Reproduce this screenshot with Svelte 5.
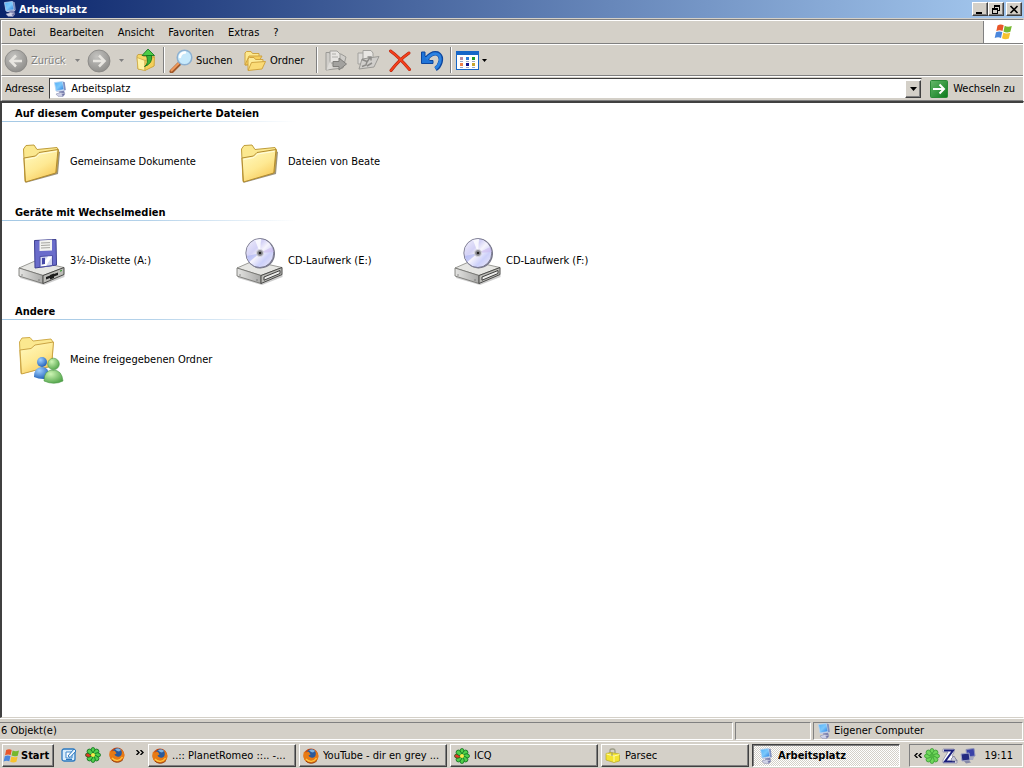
<script lang="ts">
	interface Item {
		name: string;
		icon: string;
	}

	interface Group {
		title: string;
		items: Item[];
	}

	const menu = ['Datei', 'Bearbeiten', 'Ansicht', 'Favoriten', 'Extras', '?'];

	const groups: Group[] = [
		{
			title: 'Auf diesem Computer gespeicherte Dateien',
			items: [
				{ name: 'Gemeinsame Dokumente', icon: 'folder' },
				{ name: 'Dateien von Beate', icon: 'folder' }
			]
		},
		{
			title: 'Geräte mit Wechselmedien',
			items: [
				{ name: '3½-Diskette (A:)', icon: 'floppy' },
				{ name: 'CD-Laufwerk (E:)', icon: 'cd' },
				{ name: 'CD-Laufwerk (F:)', icon: 'cd' }
			]
		},
		{
			title: 'Andere',
			items: [{ name: 'Meine freigegebenen Ordner', icon: 'shared' }]
		}
	];

	const tasks = [
		{ title: '..:: PlanetRomeo ::.. -...', icon: 'firefox' },
		{ title: 'YouTube - dir en grey ...', icon: 'firefox' },
		{ title: 'ICQ', icon: 'icq' },
		{ title: 'Parsec', icon: 'parsec' },
		{ title: 'Arbeitsplatz', icon: 'computer' }
	];

	let active = $state('Arbeitsplatz');
	let address = $state('Arbeitsplatz');
	let selected = $state('');
</script>

<!-- shared gradients -->
<svg class="defs" width="0" height="0" aria-hidden="true">
	<defs>
		<linearGradient id="folderFront" x1="0" y1="0" x2="0.6" y2="1">
			<stop offset="0" stop-color="#fffbc4" />
			<stop offset="0.6" stop-color="#fee993" />
			<stop offset="1" stop-color="#f8cb5c" />
		</linearGradient>
		<linearGradient id="screen" x1="0" y1="0" x2="1" y2="1">
			<stop offset="0" stop-color="#4fb0f8" />
			<stop offset="0.5" stop-color="#7cc8fb" />
			<stop offset="1" stop-color="#1e74dc" />
		</linearGradient>
		<linearGradient id="disc" x1="0" y1="0" x2="1" y2="1">
			<stop offset="0" stop-color="#f4f2fb" />
			<stop offset="0.35" stop-color="#d4d2f6" />
			<stop offset="0.5" stop-color="#f6f4fc" />
			<stop offset="0.7" stop-color="#ccd0fa" />
			<stop offset="1" stop-color="#f1ecf6" />
		</linearGradient>
		<linearGradient id="steel" x1="0" y1="0" x2="1" y2="0">
			<stop offset="0" stop-color="#e4e4e2" />
			<stop offset="1" stop-color="#a9a9a7" />
		</linearGradient>
		<radialGradient id="nav" cx="0.4" cy="0.3" r="0.75">
			<stop offset="0" stop-color="#c4c3c0" />
			<stop offset="1" stop-color="#8d8c89" />
		</radialGradient>
		<radialGradient id="blueMan" cx="0.35" cy="0.3" r="0.8">
			<stop offset="0" stop-color="#9fd0ff" />
			<stop offset="1" stop-color="#1657b4" />
		</radialGradient>
		<radialGradient id="greenMan" cx="0.35" cy="0.3" r="0.8">
			<stop offset="0" stop-color="#cdf5b4" />
			<stop offset="1" stop-color="#4a9f43" />
		</radialGradient>
		<linearGradient id="go" x1="0" y1="0" x2="1" y2="1">
			<stop offset="0" stop-color="#66b96a" />
			<stop offset="1" stop-color="#0b7a1c" />
		</linearGradient>
		<radialGradient id="fox" cx="0.6" cy="0.7" r="0.7">
			<stop offset="0" stop-color="#ffb52a" />
			<stop offset="1" stop-color="#c8420a" />
		</radialGradient>
	</defs>
</svg>

{#snippet computer()}
	<svg width="16" height="16" viewBox="0 0 16 16" aria-hidden="true">
		<path d="M2.500 1.500 10.500 0.500 12 8.500 4 10Z" fill="url(#screen)" stroke="#b8d4f2" stroke-width="0.800" />
		<path d="M10.800 0.500 12.800 1.200 13.800 9 12.200 9.500Z" fill="#7f90c0" />
		<path d="M4 10.300 12.200 9 13.500 9.300 12 10.500 5 11Z" fill="#c3cbe6" />
		<path d="M7 10.500 12 9.800 12.800 12 8 13Z" fill="#7d83b0" />
		<path d="M4 13 8.500 11.500 13 12.800 11 15.500 6 15.300Z" fill="#d0d3e8" stroke="#8c90b4" stroke-width="0.600" />
		<path d="M9.500 13.500 13 12.500 11 15.300Z" fill="#6d70a4" />
	</svg>
{/snippet}

{#snippet flag()}
	<svg width="20" height="18" viewBox="0 0 20 18" aria-hidden="true">
		<path d="M3.500 2.400C5.700 1 7.800 1.200 9.700 2.200L8.500 8C6.500 7 4.500 7 2.300 8.200Z" fill="#e8562a" />
		<path d="M10.700 2.800C12.800 3.900 15 4 17.800 2.900L16.400 8.700C14 9.700 11.500 9.600 9.500 8.500Z" fill="#76b82f" />
		<path d="M2 9.300C4.200 8.100 6.300 8.200 8.300 9.100L7 14.900C5 13.900 3 13.900 0.700 15Z" fill="#4a86dc" />
		<path d="M9.300 9.600C11.400 10.700 13.600 10.700 16.200 9.800L14.900 15.500C12.300 16.600 10 16.400 8 15.300Z" fill="#f7c22e" />
	</svg>
{/snippet}

{#snippet firefox()}
	<svg width="16" height="16" viewBox="0 0 16 16" aria-hidden="true">
		<circle cx="8" cy="8" r="7.500" fill="url(#fox)" />
		<circle cx="8.400" cy="6.200" r="5" fill="#2a5a9c" />
		<path d="M6 2.200C8 1 11 1.600 12 3L10 4.500 8 4Z" fill="#7fb4e0" />
		<path d="M1 3.500 3 4.500C4 3.500 5 3.500 6 4L7.500 6.500 5.500 7.600C6.500 10 10 10.500 12 8.500 13.300 6.500 12.800 4 12 2.500 15 4.500 16 8 14.700 11 12 16 4.500 16.500 1.600 12 0 9 0.200 6 1 3.500Z" fill="#e87a14" />
		<path d="M3 11C6 14.500 11 14 13.500 10" fill="none" stroke="#ffc742" stroke-width="1.300" />
		<path d="M3 13C6 16 11 16 14 12.500" fill="none" stroke="#7a2c0c" stroke-width="0.800" />
	</svg>
{/snippet}

{#snippet icq(light: boolean)}
	<svg width="16" height="16" viewBox="0 0 16 16" aria-hidden="true">
		{#each [0, 45, 90, 135, 180, 225, 270, 315] as angle (angle)}
			<ellipse
				cx="8"
				cy="3.500"
				rx="2.200"
				ry="3"
				transform="rotate({angle} 8 8)"
				fill={!light && angle === 270 ? '#e03a24' : light ? '#6fd65a' : '#4fd04a'}
				stroke={light ? '#3a9a34' : '#0e6b1c'}
				stroke-width="0.800"
			/>
		{/each}
		<circle cx="8" cy="8" r="2" fill={light ? '#4fb840' : '#f8ec4a'} />
	</svg>
{/snippet}

{#snippet parsec()}
	<svg width="16" height="16" viewBox="0 0 16 16" aria-hidden="true">
		<path d="M5 5V2.500Q5 1 7 1H8Q10 1 10 3V5" fill="none" stroke="#9c9c86" stroke-width="1.300" />
		<path d="M1 5.500 6 4.500 14.500 6V13L9 14.500 1 12Z" fill="#f3e330" stroke="#b8a824" stroke-width="0.700" />
		<path d="M1.500 6 9 8 14.500 6.500M9 8V14" fill="none" stroke="#fffbaa" />
		<path d="M7 4.500V8" stroke="#8d8d7a" />
	</svg>
{/snippet}

{#snippet folder()}
	<svg width="48" height="48" viewBox="0 0 48 48" aria-hidden="true">
		<path d="M8 45 41 36 43 14 41 13 39 33 9 44Z" fill="#70654a" opacity="0.700" />
		<path d="M6.500 11 9 7.500 17 7 20 11.500 40 9.500 41.500 12 39.500 34 8 43.500Z" fill="#fbe88f" stroke="#bf9d3b" />
		<path d="M7 20 18.500 18 22 14.500 41 11.500 38.800 35 8.500 44Z" fill="url(#folderFront)" stroke="#b28b2e" />
		<path d="M8.500 21.500 19 19.500 22.500 16 39.500 13.300" fill="none" stroke="#fffde0" />
	</svg>
{/snippet}

{#snippet base()}
	<path d="M3 38 27 45.500 47.500 37 47.500 40 27 48 3 41Z" fill="#9b9b9b" opacity="0.500" />
	<path d="M2 31 18 24 47 30.500 26 38.500Z" fill="#e6e6e3" stroke="#84847f" stroke-width="0.800" />
	<path d="M2 31 26 38.500V46.500L2 39Z" fill="url(#steel)" stroke="#6c6c68" stroke-width="0.800" />
	<path d="M26 38.500 47 30.500V37.500L26 46.500Z" fill="#bcbcb8" stroke="#4a4a48" />
	<path d="M5 37.500v1M22 42.500v1" stroke="#444" />
{/snippet}

{#snippet floppy()}
	<svg width="48" height="48" viewBox="0 0 48 48" aria-hidden="true">
		{@render base()}
		<path d="M29 40 41 35.500V38L29 42.500Z" fill="#1c1c1c" />
		<path d="M33 38 37 36.500V41L33 42.500Z" fill="#1c1c1c" />
		<path d="M43 33.500 45 32.700V34L43 34.800Z" fill="#3d9a35" />
		<path d="M17.500 3.500 39 2.500 39.500 28 18 31Z" fill="#6a6ccb" stroke="#3d3f90" />
		<path d="M22.500 3.500 35 2.800V13.500L22.500 14Z" fill="#f3f3f0" />
		<path d="M24 6 33 5.600M24 8.500 33 8M24 11 33 10.600" stroke="#a5a5a0" />
		<path d="M23 19.500 35.500 18.500V28.500L23 30.200Z" fill="#d4d8f2" stroke="#4d4fa6" />
		<path d="M24 29 31 19.500H35L29 29Z" fill="#fff" />
		<path d="M25 21 28 20.700V27L25 27.500Z" fill="#4548a8" />
	</svg>
{/snippet}

{#snippet cd()}
	<svg width="48" height="48" viewBox="0 0 48 48" aria-hidden="true">
		{@render base()}
		<path d="M29 40 45 33.500V36.500L29 43.200Z" fill="#ededeb" stroke="#2c2c2c" stroke-width="0.900" />
		<ellipse cx="25.500" cy="16.500" rx="14.500" ry="15" fill="#77778a" />
		<ellipse cx="24.800" cy="16" rx="14" ry="14.500" fill="url(#disc)" stroke="#6c6c80" stroke-width="0.800" />
		<path d="M25 16 12 19 14 25Z" fill="#a9b2f4" opacity="0.600" />
		<path d="M25 16 37 10 39 15Z" fill="#cbb9ee" opacity="0.600" />
		<path d="M25 16 20 3 26 2Z" fill="#fff" opacity="0.800" />
		<circle cx="25" cy="16" r="3.500" fill="#8c8c94" stroke="#dadae2" />
		<circle cx="25" cy="16" r="1.300" fill="#222" />
	</svg>
{/snippet}

{#snippet shared()}
	<svg width="48" height="48" viewBox="0 0 48 48" aria-hidden="true">
		<path d="M2.500 6 5 2 13 1.500 16 5 34 3 36 6 35 30 4 37.500Z" fill="#fbe88f" stroke="#d0ac4a" />
		<path d="M3 14 14 12.500 18 9 36.500 6 34.500 30 4.500 38Z" fill="url(#folderFront)" stroke="#cba444" />
		<path d="M17 41Q17 31 25 31 32 31 32 40L29 43Q22 43.500 17 41Z" fill="url(#blueMan)" />
		<circle cx="25" cy="26" r="5" fill="url(#blueMan)" />
		<path d="M27 45Q27 34 36 34 45 34 46 45 37 49.500 27 45Z" fill="url(#greenMan)" stroke="#4e9a48" stroke-width="0.600" />
		<circle cx="36.500" cy="28" r="5.800" fill="url(#greenMan)" stroke="#4e9a48" stroke-width="0.600" />
	</svg>
{/snippet}

{#snippet nav(dir: string)}
	<svg width="24" height="24" viewBox="0 0 24 24" aria-hidden="true">
		<circle cx="12" cy="12" r="11" fill="url(#nav)" stroke="#858481" stroke-width="0.800" />
		<path
			d={dir === 'back' ? 'M18 12H7M12 6.500 6.500 12 12 17.500' : 'M6 12H17M12 6.500 17.500 12 12 17.500'}
			fill="none"
			stroke="#e8e6e1"
			stroke-width="2.500"
		/>
	</svg>
{/snippet}

{#snippet arrow()}
	<svg width="5" height="3" viewBox="0 0 5 3" aria-hidden="true"><path d="M0 0H5L2.500 3Z" fill="currentColor" /></svg>
{/snippet}

{#snippet icon(name: string)}
	{#if name === 'folder'}
		{@render folder()}
	{:else if name === 'floppy'}
		{@render floppy()}
	{:else if name === 'cd'}
		{@render cd()}
	{:else if name === 'shared'}
		{@render shared()}
	{:else if name === 'firefox'}
		{@render firefox()}
	{:else if name === 'icq'}
		{@render icq(false)}
	{:else if name === 'parsec'}
		{@render parsec()}
	{:else}
		{@render computer()}
	{/if}
{/snippet}

<div class="desktop">
	<header class="titlebar">
		{@render computer()}
		<h1>Arbeitsplatz</h1>
		<div class="window-buttons">
			<button aria-label="Minimieren">
				<svg width="10" height="9" viewBox="0 0 10 9"><path d="M1 7H7V9H1Z" /></svg>
			</button>
			<button aria-label="Verkleinern">
				<svg width="10" height="9" viewBox="0 0 10 9">
					<path d="M3 0H9V6H7V5H8V2H4V3H3ZM1 3H7V9H1ZM2 5V8H6V5Z" fill-rule="evenodd" />
				</svg>
			</button>
			<button class="close" aria-label="Schließen">
				<svg width="10" height="9" viewBox="0 0 10 9"><path d="M1.500 1 8.500 8M8.500 1 1.500 8" stroke="#000" stroke-width="1.600" /></svg>
			</button>
		</div>
	</header>

	<div class="bars">
		<div class="menu-row">
			<nav>
				{#each menu as entry (entry)}
					<button>{entry}</button>
				{/each}
			</nav>
			<div class="logo">{@render flag()}</div>
		</div>

		<div class="toolbar">
			<button class="back" disabled>{@render nav('back')}<span>Zurück</span></button>
			<button class="drop" disabled aria-label="Zurück-Liste">{@render arrow()}</button>
			<button class="forward" disabled aria-label="Vorwärts">{@render nav('forward')}</button>
			<button class="drop wide" disabled aria-label="Vorwärts-Liste">{@render arrow()}</button>
			<button class="up" aria-label="Aufwärts">
				<svg width="20" height="24" viewBox="0 0 20 24" aria-hidden="true">
					<path d="M1 8 2 6.500H6L7.500 8.500 18 8V18L9 22 2 21Z" fill="#f6d766" stroke="#c9a444" />
					<path d="M1 9.500 9 12.500V22.500L2 21Z" fill="#fff3a6" stroke="#cba848" stroke-width="0.800" />
					<path d="M9 12.500 18.500 9 18 18 9 22.500Z" fill="#f5cf5a" stroke="#c9a444" stroke-width="0.800" />
					<path d="M8.500 18.500Q13 16 10.500 7.500H15.500Q17 15.500 8.500 18.500Z" fill="#36b13a" stroke="#0d7016" stroke-width="0.800" />
					<path d="M6 7.500 12 1 18.500 7.500Z" fill="#4ccc48" stroke="#0d7016" stroke-width="0.800" />
				</svg>
			</button>
			<div class="separator"></div>
			<button class="search">
				<svg width="24" height="24" viewBox="0 0 24 24" aria-hidden="true">
					<path d="M10 15 2.500 22.500" stroke="#a0592b" stroke-width="4" stroke-linecap="round" />
					<path d="M9.500 14.500 2.500 21.500" stroke="#f09a5c" stroke-width="2" stroke-linecap="round" />
					<circle cx="15.500" cy="8.500" r="7.300" fill="#c7e9fb" stroke="#8db0d0" stroke-width="1.500" />
					<path d="M11 8Q11.500 4 16 3.500" fill="none" stroke="#fff" stroke-width="2.500" stroke-linecap="round" />
				</svg>
				<span>Suchen</span>
			</button>
			<button class="folders">
				<svg width="24" height="24" viewBox="0 0 24 24" aria-hidden="true">
					<path d="M2 16V4L3.500 2.500H8L9.500 4.500H16V8L6 16Z" fill="#fde98f" stroke="#d0a440" />
					<path d="M2 16 6 7H19L15 14Z" fill="#f8cf5c" stroke="#d0a440" />
					<path d="M5 21V10L6.500 8.500H11L12.500 10.500H20V13Z" fill="#fdeb99" stroke="#d0a440" />
					<path d="M5 21.500 8.500 13.500 22.500 12.500 19 20Z" fill="#fadb76" stroke="#d0a440" />
				</svg>
				<span>Ordner</span>
			</button>
			<div class="separator"></div>
			<button class="tool" disabled aria-label="Verschieben nach">
				<svg width="24" height="24" viewBox="0 0 24 24" aria-hidden="true">
					<path d="M2 21V3.500H6V5H17L22 8 19 19Z" fill="#cfcdc9" stroke="#9b9a96" />
					<path d="M6 2H13L16 5V14H6Z" fill="#e7e5e2" stroke="#a3a29e" />
					<path d="M8 5H12M8 8H14" stroke="#b0afab" />
					<path d="M2.500 21 6 12 9 19Z" fill="#dddbd7" />
					<path d="M9 12.500H15V9L22.500 15 15 21V17.500H9Z" fill="#a3a29f" stroke="#7f7e7b" />
				</svg>
			</button>
			<button class="tool" disabled aria-label="Kopieren nach">
				<svg width="24" height="24" viewBox="0 0 24 24" aria-hidden="true">
					<path d="M2 4H9V15H2Z" fill="#dddbd8" stroke="#a3a29e" />
					<path d="M7 1.500H15L17 4V14H7Z" fill="#e9e7e4" stroke="#a3a29e" />
					<path d="M3 20 6 10 23 7.500 18 18Z" fill="#d0cecb" stroke="#9b9a96" />
					<path d="M6 10.500 11 12.500 10 16 6 17.500M11 13 14 8.500M11.500 8H15V11.500M11 17 16 14" fill="none" stroke="#8d8c89" stroke-width="1.500" />
				</svg>
			</button>
			<button class="tool" aria-label="Löschen">
				<svg width="24" height="24" viewBox="0 0 24 24" aria-hidden="true">
					<path d="M2.500 2Q11 8 21.500 20.500M21 4Q11 11 3 21.500" fill="none" stroke="#b3240d" stroke-width="3" stroke-linecap="round" />
					<path d="M2.500 2Q11 8 21.500 20.500M21 4Q11 11 3 21.500" fill="none" stroke="#f4401c" stroke-width="2" stroke-linecap="round" />
				</svg>
			</button>
			<button class="tool" aria-label="Rückgängig">
				<svg width="24" height="24" viewBox="0 0 24 24" aria-hidden="true">
					<path d="M7 9Q12 3 17.500 4.500 22 7 20.500 13 19 18 15.500 20" fill="none" stroke="#0d469e" stroke-width="4.500" />
					<path d="M1.500 3H5V7L7 9 10 11.500H13V14.500H1.500Z" fill="#1f74d8" stroke="#0d469e" />
					<path d="M6.500 10Q12 3.500 17.500 5 21.500 7 20 13 18.500 17.500 15.500 19.500" fill="none" stroke="#2b82e2" stroke-width="2.800" />
				</svg>
			</button>
			<div class="separator"></div>
			<button class="view" aria-label="Ansichten">
				<svg width="23" height="19" viewBox="0 0 23 19" aria-hidden="true">
					<rect x="0.500" y="0.500" width="22" height="18" fill="#fff" stroke="#1566c8" />
					<path d="M0 0H23V4H0Z" fill="#1566c8" />
					<path d="M4 6H7V9H4Z" fill="#b58ba8" /><path d="M10 6H13V9H10Z" fill="#2b7bd8" /><path d="M16 6H19V9H16Z" fill="#1c9a2c" />
					<path d="M4 12H7V15H4Z" fill="#f08048" /><path d="M10 12H13V15H10Z" fill="#14148c" /><path d="M16 12H19V15H16Z" fill="#c7a52c" />
					<path d="M4 10.500H7M10 10.500H13M16 10.500H19M4 16.500H7M10 16.500H13M16 16.500H19" stroke="#9aa7c4" />
				</svg>
				{@render arrow()}
			</button>
		</div>

		<form class="address-row" onsubmit={(e) => e.preventDefault()}>
			<label for="address">Adresse</label>
			<div class="address">
				{@render computer()}
				<input id="address" type="text" bind:value={address} />
				<button class="open" type="button" aria-label="Liste öffnen">
					<svg width="7" height="4" viewBox="0 0 7 4" aria-hidden="true"><path d="M0 0H7L3.500 4Z" /></svg>
				</button>
			</div>
			<button class="go">
				<svg width="18" height="18" viewBox="0 0 18 18" aria-hidden="true">
					<rect x="0.500" y="0.500" width="17" height="17" rx="1" fill="url(#go)" stroke="#2a8a36" />
					<path d="M3 9H14M9.500 4.500 14 9 9.500 13.500" fill="none" stroke="#fff" stroke-width="2" />
				</svg>
				<span>Wechseln zu</span>
			</button>
		</form>
	</div>

	<main>
		{#each groups as group (group.title)}
			<section>
				<h2>{group.title}</h2>
				<div class="items">
					{#each group.items as item (item.name)}
						<button class="item" class:selected={selected === item.name} onclick={() => (selected = item.name)}>
							{@render icon(item.icon)}
							<span>{item.name}</span>
						</button>
					{/each}
				</div>
			</section>
		{/each}
	</main>

	<footer class="status">
		<div class="count">6 Objekt(e)</div>
		<div class="blank"></div>
		<div class="zone">{@render computer()}<span>Eigener Computer</span></div>
	</footer>

	<div class="taskbar">
		<button class="raised start">{@render flag()}<span>Start</span></button>
		<div class="quick">
			<button aria-label="Desktop anzeigen">
				<svg width="16" height="16" viewBox="0 0 16 16" aria-hidden="true">
					<rect x="1" y="2" width="13" height="12" rx="2" fill="#d8ecfb" stroke="#2b78c0" stroke-width="1.300" />
					<path d="M5 5H11V11H5Z" fill="#fff" stroke="#3d86ca" />
					<path d="M7 9 13 2 15 4 9 10.500Z" fill="#eef6fc" stroke="#2b78c0" />
					<path d="M5 12.500H11" stroke="#2b78c0" />
				</svg>
			</button>
			<button aria-label="ICQ starten">{@render icq(false)}</button>
			<button aria-label="Firefox starten">{@render firefox()}</button>
			<button class="more" aria-label="Weitere Symbole">
				<svg width="8" height="5" viewBox="0 0 8 5" aria-hidden="true">
					<path d="M0.500 0 3 2.500 0.500 5M4.500 0 7 2.500 4.500 5" fill="none" stroke="#000" stroke-width="1.400" />
				</svg>
			</button>
		</div>
		<div class="tasks">
			{#each tasks as task (task.title)}
				<button class="raised task" class:active={active === task.title} onclick={() => (active = task.title)}>
					{@render icon(task.icon)}
					<span>{task.title}</span>
				</button>
			{/each}
		</div>
		<div class="tray">
			<svg width="8" height="5" viewBox="0 0 8 5" aria-hidden="true">
				<path d="M3.500 0 1 2.500 3.500 5M7.500 0 5 2.500 7.500 5" fill="none" stroke="#000" stroke-width="1.400" />
			</svg>
			{@render icq(true)}
			<svg width="16" height="16" viewBox="0 0 16 16" aria-hidden="true">
				<path d="M1 1H12V4L10 8 15 12V15H1V12L6 4H1Z" fill="#fff" stroke="#8a8aa8" stroke-width="0.800" />
				<path d="M2 2.500H11L3 13.500H13" fill="none" stroke="#1b1f7c" stroke-width="2" />
				<path d="M9 11 12 8 15 13H10Z" fill="#c8c8d8" stroke="#70708c" stroke-width="0.700" />
			</svg>
			<svg width="16" height="16" viewBox="0 0 16 16" aria-hidden="true">
				<path d="M6 1.500 14 0.500 15 8 7 9Z" fill="#3a42a8" stroke="#8f93b8" />
				<path d="M9 9H14L13 12H9Z" fill="#a6a8c0" />
				<path d="M1 6 9 5 10 12 2 13Z" fill="#232a80" stroke="#a2a6c8" />
				<path d="M4 13 9 12.500 11 14.500 6 15.500Z" fill="#8588a8" />
			</svg>
			<time>19:11</time>
		</div>
	</div>
</div>

<style>
	:global(body) {
		margin: 0;
		background: #d4d0c8;
	}
	.defs {
		position: absolute;
	}
	.desktop {
		display: flex;
		flex-direction: column;
		min-height: 100vh;
		background: #d4d0c8;
		color: #000;
		font: 11px/14px Tahoma, 'DejaVu Sans Condensed', 'DejaVu Sans', sans-serif;
	}
	.desktop svg {
		display: block;
		flex: none;
	}
	button {
		display: flex;
		align-items: center;
		margin: 0;
		padding: 0;
		border: 0;
		background: none;
		color: inherit;
		font: inherit;
		white-space: nowrap;
	}
	h1,
	h2 {
		margin: 0;
		font-size: 11px;
		font-weight: bold;
	}

	/* title bar */
	.titlebar {
		display: flex;
		align-items: center;
		gap: 1px;
		height: 18px;
		padding: 0 2px;
		background: linear-gradient(to right, #0a246a, #a6caf0);
		color: #fff;
	}
	.titlebar h1 {
		padding-top: 1px;
	}
	.window-buttons {
		display: flex;
		margin-left: auto;
	}
	.window-buttons button,
	.open {
		box-sizing: border-box;
		justify-content: center;
		width: 16px;
		height: 14px;
		border: 1px solid;
		border-color: #fff #404040 #404040 #fff;
		background: #d4d0c8;
		box-shadow: inset -1px -1px #808080;
	}
	.window-buttons .close {
		margin-left: 2px;
	}

	/* menu, tool and address bars */
	.bars {
		margin-top: 1px;
		border: 1px solid #808080;
		border-bottom: 0;
		border-right-color: #fff;
	}
	.menu-row,
	.toolbar,
	.address-row {
		display: flex;
		align-items: center;
		border-top: 1px solid #fff;
		border-bottom: 1px solid #808080;
		border-left: 1px solid #fff;
	}
	.menu-row {
		height: 22px;
	}
	nav {
		display: flex;
		flex: 1;
		gap: 14px;
		padding: 1px 0 0 7px;
	}
	.logo {
		display: flex;
		align-items: center;
		justify-content: center;
		width: 39px;
		height: 22px;
		border-left: 1px solid #808080;
		background: #fff;
	}
	.toolbar {
		height: 30px;
	}
	.toolbar button {
		height: 26px;
		padding-top: 1px;
	}
	.toolbar button:disabled {
		color: #808080;
		text-shadow: 1px 1px #fff;
	}
	.toolbar .back,
	.toolbar .search,
	.toolbar .folders {
		gap: 3px;
		padding-left: 2px;
	}
	.back {
		width: 68px;
	}
	.drop {
		justify-content: center;
		width: 14px;
	}
	.drop.wide {
		width: 20px;
	}
	.toolbar .forward {
		padding-left: 3px;
	}
	.toolbar .up {
		padding: 0 5px;
	}
	.separator {
		height: 26px;
		margin: 0 2px;
		border-left: 1px solid #808080;
		border-right: 1px solid #fff;
	}
	.search {
		width: 74px;
	}
	.folders {
		width: 73px;
	}
	.tool {
		justify-content: center;
		width: 32px;
	}
	.toolbar .view {
		gap: 3px;
		padding-left: 2px;
	}
	.address-row {
		height: 23px;
	}
	.address-row label {
		padding: 0 5px 0 3px;
	}
	.address {
		display: flex;
		flex: 1;
		align-items: center;
		box-sizing: border-box;
		height: 21px;
		padding-left: 2px;
		border: 1px solid;
		border-color: #404040 #d4d0c8 #d4d0c8 #404040;
		background: #fff;
	}
	.address input {
		flex: 1;
		min-width: 0;
		margin: 0;
		padding: 1px 3px 0;
		border: 0;
		outline: 0;
		background: none;
		font: inherit;
	}
	.open {
		height: 18px;
	}
	.go {
		gap: 5px;
		padding: 0 8px;
	}

	/* folder contents */
	main {
		flex: 1;
		border: 2px solid #404040;
		border-width: 2px 1px 1px 2px;
		border-right-color: #fff;
		border-bottom-color: #d4d0c8;
		background: #fff;
	}
	h2 {
		box-sizing: border-box;
		width: 294px;
		height: 19px;
		padding: 4px 0 0 13px;
		border-bottom: 1px solid;
		border-image: linear-gradient(to right, #a4c8e4, #b4d2ea 50%, #fff) 1;
		white-space: nowrap;
	}
	.items {
		display: flex;
		flex-wrap: wrap;
		padding: 16px 15px;
	}
	.item {
		gap: 5px;
		width: 218px;
		text-align: left;
	}
	.item.selected span {
		background: #0a246a;
		color: #fff;
	}

	/* status bar */
	.status {
		display: flex;
		gap: 2px;
		padding: 3px 1px 1px 0;
		border-top: 1px solid #fff;
	}
	.status div {
		display: flex;
		align-items: center;
		gap: 2px;
		height: 16px;
		border: 1px solid;
		border-color: #808080 #fff #fff #808080;
	}
	.status .count {
		flex: 1;
		border-left: 0;
		padding-left: 1px;
	}
	.blank {
		width: 74px;
	}
	.zone {
		width: 206px;
		padding-left: 2px;
	}

	/* taskbar */
	.taskbar {
		display: flex;
		align-items: center;
		height: 24px;
		padding: 1px 1px 1px 2px;
		border-top: 1px solid #fff;
	}
	.raised {
		box-sizing: border-box;
		height: 23px;
		padding-top: 1px;
		border: 1px solid;
		border-color: #fff #404040 #404040 #fff;
		box-shadow: inset -1px -1px #808080;
	}
	.start {
		width: 52px;
		font-weight: bold;
	}
	.start svg {
		width: 18px;
	}
	.quick {
		display: flex;
		gap: 8px;
		width: 87px;
		padding-left: 7px;
	}
	.more {
		align-self: flex-start;
		margin-left: 3px;
		padding-top: 3px;
	}
	.tasks {
		display: flex;
		flex: 1;
		gap: 3px;
	}
	.task {
		flex: 0 1 148px;
		gap: 4px;
		min-width: 0;
		padding: 1px 3px 0;
	}
	.task span {
		overflow: hidden;
		text-overflow: ellipsis;
	}
	.task.active {
		padding-left: 5px;
		border-color: #404040 #fff #fff #404040;
		background: repeating-conic-gradient(#fff 0 25%, #d4d0c8 0 50%) 0 0 / 2px 2px;
		box-shadow: inset 1px 1px #808080;
		font-weight: bold;
	}
	.tray {
		display: flex;
		align-items: center;
		gap: 2px;
		box-sizing: border-box;
		height: 23px;
		padding: 1px 9px 0 4px;
		border: 1px solid;
		border-color: #808080 #fff #fff #808080;
	}
	.tray time {
		margin-left: 6px;
	}
</style>
